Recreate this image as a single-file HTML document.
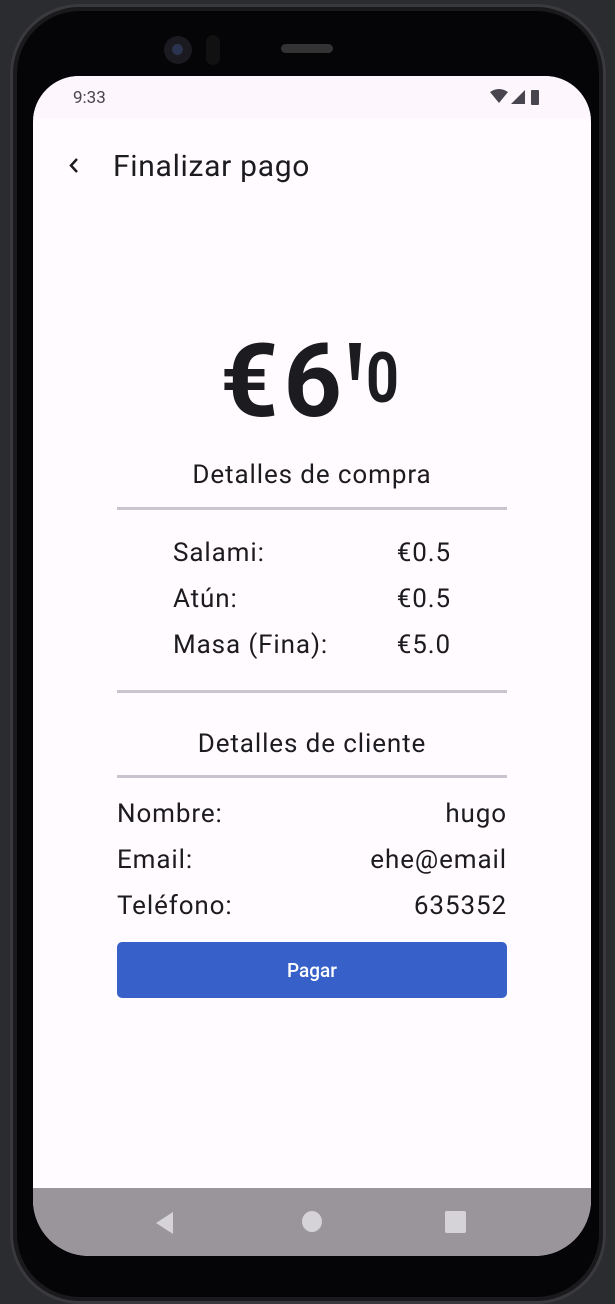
<!DOCTYPE html>
<html><head><meta charset="utf-8"><style>
*{margin:0;padding:0;box-sizing:border-box}
body{width:615px;height:1276px;background:#2b2c30;position:relative;overflow:hidden;font-family:"Roboto","Liberation Sans",sans-serif}
.frame{position:absolute;left:10px;top:4px;width:596px;height:1300px;border-radius:70px;background:#050507;border:3px solid #3a3a3e;box-shadow:inset 0 0 0 4px #1a1a1c}
.screen{position:absolute;left:33px;top:76px;width:558px;height:1180px;border-radius:46px 46px 56px 56px;background:#fffbfe;overflow:hidden}
.status{position:absolute;left:0;top:0;width:558px;height:42px;background:#fdf7fd}
.t{position:absolute;line-height:1;white-space:nowrap;color:#1c1b1f}
.b{font-size:26px;letter-spacing:0.9px}
.line{position:absolute;left:84px;width:390px;height:3px;background:#cac4d0}
.nav{position:absolute;left:0;top:1112px;width:558px;height:68px;background:#9a959a}
.btn{position:absolute;left:84px;top:866px;width:390px;height:56px;background:#3761c9;border-radius:5px;color:#fff;font-size:19px;font-weight:500;text-align:center;line-height:58px}
</style></head><body>
<div class="frame"></div>
<div style="position:absolute;left:164px;top:36px;width:28px;height:28px;border-radius:50%;background:#1a1a20"></div>
<div style="position:absolute;left:172px;top:44px;width:11px;height:11px;border-radius:50%;background:#2a3350"></div>
<div style="position:absolute;left:206px;top:35px;width:14px;height:30px;border-radius:7px;background:#111"></div>
<div style="position:absolute;left:281px;top:44px;width:52px;height:9px;border-radius:5px;background:#333"></div>
<div class="screen">
 <div class="status"></div>
 <div class="t" style="left:40px;top:14px;font-size:17px;color:#49454f">9:33</div>
 <svg style="position:absolute;left:456px;top:12px" width="80" height="20" viewBox="0 0 80 20">
  <path d="M1 4 Q10 -2 19 4 L10 15 Z" fill="#49454f"/>
  <path d="M22 16 L36 2 L36 16 Z" fill="#49454f"/>
  <rect x="42" y="2" width="8" height="15" rx="1" fill="#49454f"/>
 </svg>
 <svg style="position:absolute;left:34px;top:80px" width="14" height="20" viewBox="0 0 14 20"><path d="M10 3 L4 9.5 L10 16" stroke="#1c1b1f" stroke-width="2.5" fill="none"/></svg>
 <div class="t" style="left:80px;top:76px;font-size:30px;letter-spacing:0.7px">Finalizar pago</div>

 <div class="t" style="left:187px;top:254px;font-size:102px;font-weight:bold;letter-spacing:5px">€6</div>
 <svg style="position:absolute;left:315px;top:267px" width="14" height="38" viewBox="0 0 14 38"><path d="M1 0 L13 0 L10 37 L4 37 Z" fill="#1c1b1f"/></svg>
 <div class="t" style="left:333px;top:268px;font-size:70px;font-weight:bold;transform:scaleX(0.82);transform-origin:left">0</div>

 <div class="t b" style="left:0;width:558px;text-align:center;top:386px">Detalles de compra</div>
 <div class="line" style="top:431px"></div>
 <div class="t b" style="left:140px;top:464px">Salami:</div>
 <div class="t b" style="right:140px;top:464px">€0.5</div>
 <div class="t b" style="left:140px;top:510px">Atún:</div>
 <div class="t b" style="right:140px;top:510px">€0.5</div>
 <div class="t b" style="left:140px;top:556px">Masa (Fina):</div>
 <div class="t b" style="right:140px;top:556px">€5.0</div>
 <div class="line" style="top:614px"></div>
 <div class="t b" style="left:0;width:558px;text-align:center;top:655px">Detalles de cliente</div>
 <div class="line" style="top:699px"></div>
 <div class="t b" style="left:84px;top:725px">Nombre:</div>
 <div class="t b" style="right:84px;top:725px">hugo</div>
 <div class="t b" style="left:84px;top:771px">Email:</div>
 <div class="t b" style="right:84px;top:771px">ehe@email</div>
 <div class="t b" style="left:84px;top:817px">Teléfono:</div>
 <div class="t b" style="right:84px;top:817px">635352</div>
 <div class="btn">Pagar</div>

 <div class="nav">
  <svg style="position:absolute;left:120px;top:22px" width="24" height="26" viewBox="0 0 24 26"><path d="M20 2 L20 24 L3 13 Z" fill="#d6d3d8"/></svg>
  <div style="position:absolute;left:269px;top:23px;width:20px;height:21px;border-radius:50%;background:#d6d3d8"></div>
  <div style="position:absolute;left:412px;top:23px;width:21px;height:22px;border-radius:2px;background:#d6d3d8"></div>
 </div>
</div>
</body></html>
